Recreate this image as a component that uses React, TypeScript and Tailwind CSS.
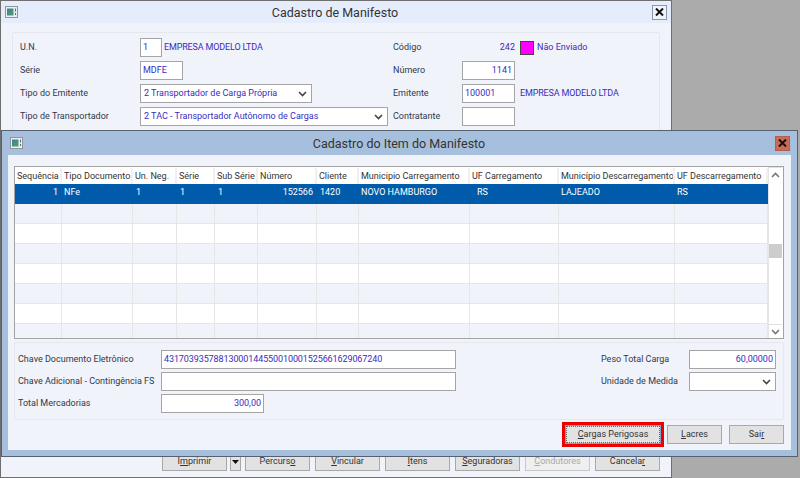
const font = { fontFamily: 'Roboto, "Liberation Sans", sans-serif' };

function WinIcon() {
  return (
    <svg width="13" height="12" viewBox="0 0 13 12" className="shrink-0">
      <defs>
        <linearGradient id="wi" x1="0" y1="0" x2="1" y2="1">
          <stop offset="0" stopColor="#3f7fa0" />
          <stop offset="1" stopColor="#4f9f6a" />
        </linearGradient>
      </defs>
      <rect x="0.5" y="0.5" width="12" height="11" fill="#eceff1" stroke="#8f959b" />
      <rect x="2" y="2.5" width="6.5" height="7" fill="url(#wi)" />
      <rect x="10" y="2.5" width="1" height="3" fill="#5d6b73" />
      <rect x="10" y="7" width="1" height="2" fill="#5d6b73" />
    </svg>
  );
}

function Field({ className = '', children }: { className?: string; children?: React.ReactNode }) {
  return (
    <div className={`h-[19px] bg-white border border-[#a5a5a5] flex items-center px-[2px] text-[#3a2cc0] shrink-0 whitespace-nowrap ${className}`}>
      {children}
    </div>
  );
}

function Chevron({ color = '#444' }: { color?: string }) {
  return (
    <svg width="9" height="6" viewBox="0 0 9 6" className="shrink-0">
      <path d="M1 1l3.5 3.5L8 1" fill="none" stroke={color} strokeWidth="1.6" />
    </svg>
  );
}

function Btn({ w, disabled, children }: { w: string; disabled?: boolean; children: React.ReactNode }) {
  return (
    <div className={`${w} h-[19px] border flex items-center justify-center shrink-0 ${disabled ? 'text-[#a9a9a9] bg-[#efefef] border-[#c8c8c8]' : 'text-[#333] bg-[#e2e2e2] border-[#a8a8a8]'}`}>
      {children}
    </div>
  );
}

const cols = 'grid grid-cols-[47px_71px_44px_38px_43px_59px_42px_111px_89px_116px_93px]';
const heads = ['Sequência', 'Tipo Documento', 'Un. Neg.', 'Série', 'Sub Série', 'Número', 'Cliente', 'Municipio Carregamento', 'UF Carregamento', 'Município Descarregamento', 'UF Descarregamento'];
const first = ['1', 'NFe', '1', '1', '1', '152566', '1420', 'NOVO HAMBURGO', 'RS', 'LAJEADO', 'RS'];
const cellClass = ['justify-end pr-[4px]', 'pl-[2px]', 'pl-[3px]', 'pl-[3px]', 'pl-[3px]', 'justify-end pr-[4px]', 'pl-[3px]', 'pl-[2px]', 'pl-[7px]', 'pl-[2px]', 'pl-[2px]'];

export default function App() {
  return (
    <div className="relative w-[800px] h-[478px] overflow-hidden bg-[#ababab] text-[9px] leading-none text-[#30384a]" style={font}>
      {/* back window */}
      <div className="absolute left-0 top-0 w-[672px] h-[478px] border border-[#6f6f6f] bg-[#f1f3fa] flex flex-col">
        <div className="h-[22px] bg-[#e5edfd] flex items-center justify-between pl-[4px] pr-[3px] shrink-0">
          <WinIcon />
          <span className="text-[12.5px] text-[#333] mt-[2px]">Cadastro de Manifesto</span>
          <div className="w-[15px] h-[15px] border border-[#8d99ab] bg-[#f1f3fa] flex items-center justify-center mr-[1px]">
            <svg width="9" height="8" viewBox="0 0 9 8"><path d="M1 0.5l7 7M8 0.5l-7 7" stroke="#111" strokeWidth="2" /></svg>
          </div>
        </div>
        <div className="mx-[11px] mt-[9px] border border-[#e4e7ee] rounded-[2px] h-[400px] pl-[7px] pt-[3px]">
          <div className="flex h-[23px] items-center">
            <span className="w-[120px]">U.N.</span>
            <Field className="w-[22px]">1</Field>
            <span className="ml-[2px] w-[229px] text-[#3a2cc0] tracking-[-0.15px]">EMPRESA MODELO LTDA</span>
            <span className="w-[69px]">Código</span>
            <span className="w-[53px] text-right text-[#3a2cc0]">242</span>
            <div className="ml-[5px] w-[14px] h-[14px] bg-[#ff00ff] border border-[#444]" />
            <span className="ml-[3px] text-[#3a2cc0]">Não Enviado</span>
          </div>
          <div className="flex h-[23px] items-center">
            <span className="w-[120px]">Série</span>
            <Field className="w-[43px] px-[1px]">MDFE</Field>
            <span className="ml-[210px] w-[69px]">Número</span>
            <Field className="w-[53px] justify-end">1141</Field>
          </div>
          <div className="flex h-[23px] items-center">
            <span className="w-[120px]">Tipo do Emitente</span>
            <Field className="w-[172px] justify-between pl-[3px] pr-[4px]">2 Transportador de Carga Própria<Chevron /></Field>
            <span className="ml-[81px] w-[69px]">Emitente</span>
            <Field className="w-[53px]">100001</Field>
            <span className="ml-[5px] text-[#3a2cc0] tracking-[-0.15px]">EMPRESA MODELO LTDA</span>
          </div>
          <div className="flex h-[23px] items-center">
            <span className="w-[120px]">Tipo de Transportador</span>
            <Field className="w-[248px] justify-between pl-[3px] pr-[4px]">2 TAC - Transportador Autônomo de Cargas<Chevron /></Field>
            <span className="ml-[5px] w-[69px]">Contratante</span>
            <Field className="w-[53px]" />
          </div>
        </div>
        <div className="mt-auto mb-[6px] flex pl-[161px] gap-[5px]">
          <Btn w="w-[65px]"><span>I<u>m</u>primir</span></Btn>
          <div className="w-[11px] h-[19px] -ml-[2px] -mr-[1px] border border-[#a8a8a8] bg-[#e2e2e2] flex items-center justify-center">
            <svg width="7" height="4" viewBox="0 0 7 4"><path d="M0 0h7L3.5 4z" fill="#111" /></svg>
          </div>
          <Btn w="w-[65px]"><span>Percurs<u>o</u></span></Btn>
          <Btn w="w-[65px]"><span><u>V</u>incular</span></Btn>
          <Btn w="w-[65px]"><span><u>I</u>tens</span></Btn>
          <Btn w="w-[65px]"><span><u>S</u>eguradoras</span></Btn>
          <Btn w="w-[65px]" disabled><span><u>C</u>ondutores</span></Btn>
          <Btn w="w-[65px]"><span>Cancela<u>r</u></span></Btn>
        </div>
      </div>

      {/* modal */}
      <div className="absolute left-[1px] top-[130px] w-[797px] h-[327px] border border-[#55616f] bg-[#a6bfdc] flex flex-col">
        <div className="h-[24px] flex items-center justify-between pl-[8px] pr-[7px] shrink-0">
          <WinIcon />
          <span className="text-[12.5px] text-[#333] mt-[2px]">Cadastro do Item do Manifesto</span>
          <div className="w-[15px] h-[15px] border border-[#b0604f] bg-[#cd6a55] flex items-center justify-center">
            <svg width="9" height="8" viewBox="0 0 9 8"><path d="M1 0.5l7 7M8 0.5l-7 7" stroke="#111" strokeWidth="2" /></svg>
          </div>
        </div>
        <div className="mx-[6px] flex-1 mb-[6px] bg-[#f1f3fa] pl-[6px] pr-[7px] pt-[11px] flex flex-col">
          {/* grid */}
          <div className="h-[173px] border border-[#a3a3a3] bg-white flex overflow-hidden shrink-0 text-[#333]">
            <div className="w-[753px] shrink-0">
              <div className={`${cols} h-[17px] bg-white border-t border-white`}>
                {heads.map((h) => (
                  <div key={h} className="border-r-2 border-[#f0f0f0] pl-[2px] flex items-center whitespace-nowrap overflow-hidden">{h}</div>
                ))}
              </div>
              <div className={`${cols} h-[20px] bg-[#005cab] text-white`}>
                {first.map((c, i) => (
                  <div key={i} className={`flex items-center pb-[3px] ${cellClass[i]}`}>{c}</div>
                ))}
              </div>
              {[0, 1, 2, 3, 4, 5, 6].map((r) => (
                <div key={r} className={`${cols} h-[20px] ${r % 2 === 0 ? 'bg-[#f1f3fa]' : 'bg-white'}`}>
                  {heads.map((h) => (
                    <div key={h} className="border-r border-b border-[#e6e6e6]" />
                  ))}
                </div>
              ))}
            </div>
            <div className="w-[14px] shrink-0 bg-white border-l border-[#e6e6e6] flex flex-col">
              <div className="h-[15px] border-b border-[#e0e0e0] flex items-center justify-center rotate-180"><Chevron color="#777" /></div>
              <div className="h-[62px]" />
              <div className="h-[14px] bg-[#cdcdcd]" />
              <div className="flex-1" />
              <div className="h-[14px] border-t border-[#e0e0e0] flex items-center justify-center"><Chevron color="#777" /></div>
            </div>
          </div>
          {/* lower panel */}
          <div className="mt-[3px] h-[78px] border border-[#e4e7ee] rounded-[2px] pl-[3px] pr-[6px] pt-[7px] flex shrink-0">
            <div className="flex flex-col gap-[3px]">
              <div className="flex items-center">
                <span className="w-[143px]">Chave Documento Eletrônico</span>
                <Field className="w-[295px] tracking-[-0.1px]">43170393578813000144550010001525661629067240</Field>
              </div>
              <div className="flex items-center">
                <span className="w-[143px]">Chave Adicional - Contingência FS</span>
                <Field className="w-[295px]" />
              </div>
              <div className="flex items-center">
                <span className="w-[143px]">Total Mercadorias</span>
                <Field className="w-[103px] justify-end">300,00</Field>
              </div>
            </div>
            <div className="ml-auto mr-[1px] flex flex-col gap-[3px]">
              <div className="flex items-center">
                <span className="w-[88px]">Peso Total Carga</span>
                <Field className="w-[87px] justify-end">60,00000</Field>
              </div>
              <div className="flex items-center">
                <span className="w-[88px]">Unidade de Medida</span>
                <Field className="w-[87px] justify-end pr-[4px]"><Chevron /></Field>
              </div>
            </div>
          </div>
          {/* actions */}
          <div className="flex justify-end items-center gap-[2px] mt-[2px]">
            <div className="border-[3px] border-[#ee0000] mr-[1px]">
              <div className="w-[96px] h-[19px] border border-[#7da2ce] bg-[#e2e2e2] flex items-center justify-center text-[#333] outline-1 -outline-offset-2 outline-dotted outline-[#666]">
                <span><u>C</u>argas Perigosas</span>
              </div>
            </div>
            <Btn w="w-[55px]"><span><u>L</u>acres</span></Btn>
            <div className="w-[3px]" />
            <Btn w="w-[55px]"><span>Sai<u>r</u></span></Btn>
          </div>
        </div>
      </div>
    </div>
  );
}
